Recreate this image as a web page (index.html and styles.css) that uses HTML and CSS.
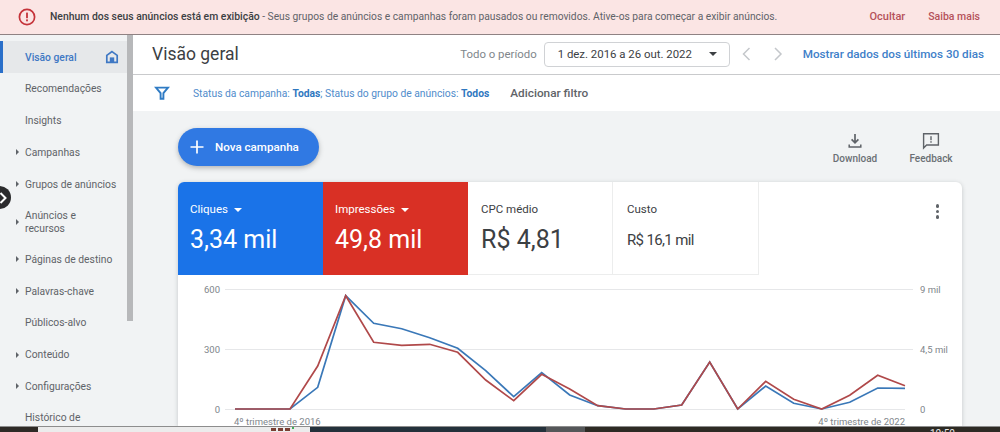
FILE: index.html
```html
<!DOCTYPE html>
<html lang="pt-BR">
<head>
  <meta charset="UTF-8" />
  <meta name="viewport" content="width=device-width, initial-scale=1.0"/>
  <title>Visão geral | Google Ads</title>
  <link rel="stylesheet" href="styles.css">
</head>
<body>

<div class="banner">
  <svg class="banner-icon" width="20" height="20" viewBox="0 0 20 20">
    <circle cx="10" cy="10" r="7.6" fill="none" stroke="#c5333a" stroke-width="1.7"/>
    <rect x="9.1" y="5.6" width="1.8" height="5.6" fill="#c5333a"/>
    <rect x="9.1" y="12.4" width="1.8" height="1.9" fill="#c5333a"/>
  </svg>
  <p class="banner-text"><strong>Nenhum dos seus anúncios está em exibição</strong> - Seus grupos de anúncios e campanhas foram pausados ou removidos. Ative-os para começar a exibir anúncios.</p>
  <a class="banner-link hide-link">Ocultar</a>
  <a class="banner-link">Saiba mais</a>
</div>

<div class="layout">
  <aside class="sidebar">
    <nav class="nav">
      <a class="nav-item active">Visão geral
        <svg class="home-icon" width="14" height="14" viewBox="0 0 14 14">
          <path d="M7 1.6 L12.2 5.4 V12.4 H1.8 V5.4 Z" fill="none" stroke="#3f78c4" stroke-width="1.7"/>
          <rect x="4.8" y="7.4" width="4.4" height="5" fill="#3f78c4"/>
        </svg>
      </a>
      <a class="nav-item">Recomendações</a>
      <a class="nav-item">Insights</a>
      <a class="nav-item has-arrow">Campanhas</a>
      <a class="nav-item has-arrow">Grupos de anúncios</a>
      <a class="nav-item has-arrow two-lines">Anúncios e recursos</a>
      <a class="nav-item has-arrow">Páginas de destino</a>
      <a class="nav-item has-arrow">Palavras-chave</a>
      <a class="nav-item">Públicos-alvo</a>
      <a class="nav-item has-arrow">Conteúdo</a>
      <a class="nav-item has-arrow">Configurações</a>
      <a class="nav-item two-lines">Histórico de alterações</a>
    </nav>
    <div class="scroll-track"><div class="scroll-thumb"></div></div>
    <div class="side-toggle">
      <svg width="8" height="12" viewBox="0 0 8 12">
        <path d="M0.5 1 L5.5 6 L0.5 11" fill="none" stroke="#fff" stroke-width="2"/>
      </svg>
    </div>
  </aside>

  <main class="main">
    <div class="page-header">
      <h1>Visão geral</h1>
      <span class="period-label">Todo o período</span>
      <div class="date-select">
        <span>1 dez. 2016 a 26 out. 2022</span>
        <i class="caret caret-dark"></i>
      </div>
      <svg class="pager" width="60" height="16" viewBox="0 0 60 16">
        <path d="M7.5 2 L1.5 8 L7.5 14" fill="none" stroke="#c4c7cb" stroke-width="1.5"/>
        <path d="M33 2 L39 8 L33 14" fill="none" stroke="#c4c7cb" stroke-width="1.5"/>
      </svg>
      <a class="last-days">Mostrar dados dos últimos 30 dias</a>
    </div>

    <div class="filter-bar">
      <svg class="filter-icon" width="16" height="16" viewBox="0 0 16 16">
        <path d="M2 2.6 H14 L9.4 8.2 V13.8 H6.6 V8.2 Z" fill="none" stroke="#2f7bc4" stroke-width="1.9"/>
      </svg>
      <span class="filter-text">Status da campanha: <b>Todas</b>; Status do grupo de anúncios: <b>Todos</b></span>
      <a class="add-filter">Adicionar filtro</a>
    </div>

    <div class="content">
      <div class="toolbar">
        <button class="new-btn">
          <svg width="14" height="14" viewBox="0 0 14 14">
            <path d="M7 0.5 V13.5 M0.5 7 H13.5" stroke="#fff" stroke-width="1.7"/>
          </svg>
          Nova campanha
        </button>
        <div class="tool">
          <svg width="18" height="18" viewBox="0 0 18 18">
            <path d="M9 2 V10.5 M5.6 7.4 L9 10.8 L12.4 7.4" fill="none" stroke="#5f6368" stroke-width="1.7"/>
            <path d="M3.2 12.5 V15 H14.8 V12.5" fill="none" stroke="#5f6368" stroke-width="1.5"/>
          </svg>
          <span>Download</span>
        </div>
        <div class="tool">
          <svg width="18" height="18" viewBox="0 0 18 18">
            <path d="M1.6 1.8 H16.4 V13 H4.6 L1.6 16 Z" fill="none" stroke="#5f6368" stroke-width="1.4"/>
            <rect x="8.3" y="4.2" width="1.4" height="4" fill="#5f6368"/>
            <rect x="8.3" y="9.2" width="1.4" height="1.5" fill="#5f6368"/>
          </svg>
          <span>Feedback</span>
        </div>
      </div>

      <section class="card">
        <div class="tabs">
          <div class="tab tab-blue">
            <div class="tab-label">Cliques <i class="caret"></i></div>
            <div class="tab-value">3,34 mil</div>
          </div>
          <div class="tab tab-red">
            <div class="tab-label">Impressões <i class="caret"></i></div>
            <div class="tab-value">49,8 mil</div>
          </div>
          <div class="tab">
            <div class="tab-label">CPC médio</div>
            <div class="tab-value">R$ 4,81</div>
          </div>
          <div class="tab">
            <div class="tab-label">Custo</div>
            <div class="tab-value tab-value-small">R$ 16,1 mil</div>
          </div>
          <div class="kebab"><i></i><i></i><i></i></div>
        </div>

        <svg class="chart" width="784" height="151" viewBox="178 275 784 151">
          <g stroke="#e6e7e9" stroke-width="1">
            <line x1="225" y1="289.5" x2="913" y2="289.5"/>
            <line x1="225" y1="349.5" x2="913" y2="349.5"/>
            <line x1="225" y1="409.5" x2="905" y2="409.5"/>
          </g>
          <g class="axis" text-anchor="end">
            <text x="220" y="292.5">600</text>
            <text x="220" y="352.5">300</text>
            <text x="220" y="412.5">0</text>
          </g>
          <g class="axis">
            <text x="920" y="292.5">9 mil</text>
            <text x="920" y="352.5">4,5 mil</text>
            <text x="920" y="412.5">0</text>
            <text x="234" y="425">4º trimestre de 2016</text>
            <text x="905" y="425" text-anchor="end">4º trimestre de 2022</text>
          </g>
          <polyline class="line line-blue" points="235,409 290,409 317.7,387.3 345.7,295.7 373.7,323.3 401.7,328.7 429.7,337.7 457.7,348.3 485.7,370.7 513.7,396.7 541.7,372.7 569.7,395 597.7,405.7 625.7,409 653.7,409 681.7,405 709.7,362 737.7,409 765.7,386 793.7,403.3 821.7,409 849.7,402.3 877.7,388 905,388.3"/>
          <polyline class="line line-red" points="235,409 290,409 317.7,366 345.7,295.7 373.7,342.3 401.7,345.3 429.7,344.3 457.7,352.3 485.7,380 513.7,400.7 541.7,374.3 569.7,389 597.7,405.7 625.7,409 653.7,409 681.7,405 709.7,362 737.7,409 765.7,381.3 793.7,399.3 821.7,409 849.7,395.3 877.7,375.3 905,385.7"/>
        </svg>
      </section>
    </div>
  </main>
</div>

<div class="taskbar">
  <div class="task-seg seg-brown"></div>
  <div class="task-seg seg-light">
    <i class="tray-dot"></i><i class="tray-dot"></i><i class="tray-dot"></i><i class="tray-green"></i>
  </div>
  <div class="task-seg seg-slate"></div>
  <div class="task-seg seg-gray"></div>
  <div class="task-seg seg-dark"><span class="clock">10:50</span></div>
</div>

</body>
</html>
```

FILE: styles.css
```css
* {
  box-sizing: border-box;
}

html, body {
  height: 100%;
}

body {
  margin: 0;
  display: flex;
  flex-direction: column;
  overflow: hidden;
  font-family: Roboto, 'Liberation Sans', sans-serif;
  background-color: #f1f3f4;
  color: #3c4043;
}

/* banner */
.banner {
  display: flex;
  align-items: center;
  height: 35px;
  flex-shrink: 0;
  padding: 0 20px 1px 17px;
  background-color: #fbe5e4;
  border-bottom: 1px solid #8f8283;
}

.banner-icon {
  margin-right: 13px;
}

.banner-text {
  flex: 1;
  margin: 0;
  font-size: 10.25px;
  color: #5f6368;
  white-space: nowrap;
}

.banner-text strong {
  font-size: 10.4px;
  font-weight: 500;
  color: #3c4043;
}

.banner-link {
  font-size: 10.5px;
  font-weight: 500;
  color: #b5525a;
}

.hide-link {
  margin-right: 23px;
  font-size: 11px;
}

/* sidebar */
.layout {
  display: flex;
  flex: 1;
  min-height: 0;
}

.sidebar {
  position: relative;
  display: flex;
  width: 133px;
  flex-shrink: 0;
  overflow: hidden;
}

.nav {
  flex: 1;
  padding-top: 6px;
  background-color: #f1f3f4;
}

.nav-item {
  position: relative;
  display: flex;
  align-items: center;
  height: 31.75px;
  padding-left: 25px;
  font-size: 10.3px;
  line-height: 13px;
  color: #5f6368;
}

.nav-item.active {
  height: 32px;
  font-weight: 500;
  color: #3f78c4;
  background-color: #e6e8ea;
  border-left: 3px solid #2a6fc9;
  padding-left: 22px;
}

.home-icon {
  margin-left: auto;
  margin-right: 8px;
}

.has-arrow::before {
  content: "";
  position: absolute;
  left: 16px;
  top: 50%;
  margin-top: -3px;
  border-left: 3px solid #5f6368;
  border-top: 3px solid transparent;
  border-bottom: 3px solid transparent;
}

.two-lines {
  height: 43.5px;
  padding-right: 30px;
}

.scroll-track {
  width: 6px;
  background-color: #f1f3f4;
}

.scroll-thumb {
  height: 286px;
  background-color: #b7b8ba;
}

.side-toggle {
  position: absolute;
  left: -12px;
  top: 151px;
  width: 23px;
  height: 23px;
  padding-left: 12px;
  display: flex;
  align-items: center;
  border-radius: 50%;
  background-color: #2b2b2d;
}

/* header */
.main {
  display: flex;
  flex-direction: column;
  flex: 1;
  min-width: 0;
}

.page-header {
  display: flex;
  align-items: center;
  height: 40px;
  flex-shrink: 0;
  padding: 0 16px 1px 19px;
  background-color: #fff;
  border-bottom: 1px solid #c9cacc;
}

h1 {
  flex: 1;
  margin: 0;
  font-size: 17.5px;
  font-weight: 400;
  color: #3c4043;
}

.period-label {
  margin-right: 7px;
  font-size: 11.4px;
  color: #80868b;
}

.date-select {
  display: flex;
  align-items: center;
  justify-content: space-between;
  width: 186px;
  height: 25px;
  padding: 0 12px 0 13px;
  font-size: 11.4px;
  color: #3c4043;
  border: 1px solid #d0d2d5;
  border-radius: 4px;
}

.pager {
  margin-left: 12px;
  margin-right: 1px;
}

.last-days {
  font-size: 11.7px;
  font-weight: 500;
  color: #3f7fc9;
}

.caret {
  display: inline-block;
  vertical-align: middle;
  margin-left: 3px;
  border-top: 4px solid #fff;
  border-left: 4px solid transparent;
  border-right: 4px solid transparent;
}

.caret-dark {
  border-top-color: #3c4043;
}

/* filters */
.filter-bar {
  display: flex;
  align-items: center;
  height: 36px;
  flex-shrink: 0;
  padding-left: 21px;
  background-color: #fff;
}

.filter-icon {
  margin-right: 23px;
}

.filter-text {
  font-size: 10.3px;
  color: #4f8ccb;
}

.filter-text b {
  font-weight: 700;
  color: #2f78c0;
}

.add-filter {
  margin-left: 21px;
  font-size: 11.8px;
  font-weight: 500;
  color: #5f6368;
}

/* content */
.content {
  flex: 1;
  min-height: 0;
  padding: 17px 38px 0 45px;
  overflow: hidden;
}

.toolbar {
  display: flex;
  align-items: flex-start;
  height: 54px;
  margin-right: -7px;
}

.new-btn {
  display: flex;
  align-items: center;
  gap: 11px;
  width: 141px;
  height: 38px;
  margin-right: auto;
  padding: 0 0 0 12px;
  font-family: inherit;
  font-size: 11.6px;
  font-weight: 500;
  color: #fff;
  background-color: #3079e3;
  border: none;
  border-radius: 19px;
  box-shadow: 0 2px 5px rgba(60,64,67,0.35);
}

.tool {
  display: flex;
  flex-direction: column;
  align-items: center;
  gap: 3px;
  width: 76px;
  margin-top: 4px;
  font-size: 10px;
  font-weight: 500;
  color: #6b7075;
}

.tool svg {
  display: block;
}

.card {
  background-color: #fff;
  border-radius: 6px 6px 0 0;
  box-shadow: 0 1px 4px rgba(60,64,67,0.25);
}

.tabs {
  position: relative;
  display: flex;
  height: 93px;
}

.tab {
  width: 145px;
  padding: 20px 12px 0 12px;
  color: #3c4043;
  border-right: 1px solid #eceded;
  border-bottom: 1px solid #eceded;
}

.tab:nth-child(3) {
  padding-left: 13px;
}

.tab:nth-child(4) {
  width: 146px;
  padding-left: 14px;
}

.tab-blue {
  color: #fff;
  background-color: #1a73e8;
  border: none;
  border-top-left-radius: 6px;
}

.tab-red {
  color: #fff;
  background-color: #d93025;
  border: none;
}

.tab-label {
  font-size: 11.5px;
  line-height: 14px;
}

.tab-value {
  margin-top: 9px;
  font-size: 25px;
  line-height: 30px;
}

.tab-value-small {
  font-size: 15px;
  letter-spacing: -0.65px;
}

.kebab {
  position: absolute;
  right: 23px;
  top: 22px;
  display: flex;
  flex-direction: column;
  gap: 2px;
}

.kebab i {
  width: 3.5px;
  height: 3.5px;
  border-radius: 50%;
  background-color: #5f6368;
}

.chart {
  display: block;
}

.axis {
  font-size: 9.5px;
  fill: #80868b;
}

.line {
  fill: none;
  stroke-width: 1.7;
}

.line-blue {
  stroke: #3a78b8;
}

.line-red {
  stroke: #b0494a;
}

/* taskbar */
.taskbar {
  display: flex;
  height: 6px;
  flex-shrink: 0;
  overflow: hidden;
  border-top: 1px solid #8d8d8d;
}

.seg-brown {
  width: 38px;
  background-color: #2e2a26;
}

.seg-light {
  display: flex;
  justify-content: flex-end;
  gap: 2px;
  width: 272px;
  padding-right: 16px;
  background-color: #ececec;
}

.tray-dot {
  width: 5px;
  height: 3px;
  margin-top: 1px;
  background-color: #7a3f33;
}

.tray-green {
  width: 2px;
  height: 2px;
  background-color: #3fae5a;
}

.seg-slate {
  width: 236px;
  background-color: #24313b;
}

.seg-gray {
  width: 39px;
  background-color: #555759;
}

.seg-dark {
  flex: 1;
  padding-left: 345px;
  background-color: #2d2a24;
}

.clock {
  display: block;
  margin-top: 1px;
  font-size: 10px;
  line-height: 12px;
  color: #e8e8e8;
}
```
